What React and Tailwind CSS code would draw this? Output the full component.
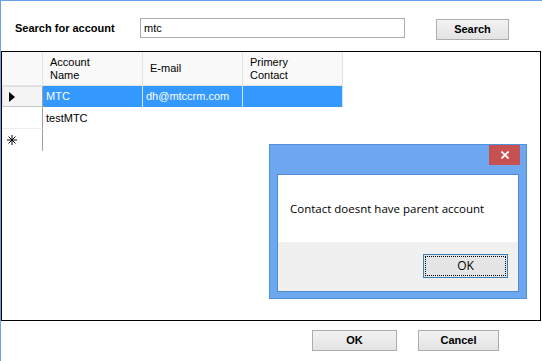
const COLS = [
  { key: "name", label: ["Account", "Name"] },
  { key: "email", label: ["E-mail"] },
  { key: "contact", label: ["Primery", "Contact"] },
];

const ROWS = [
  { name: "MTC", email: "dh@mtccrm.com", contact: "", selected: true, h: "h-[21px]" },
  { name: "testMTC", email: "", contact: "", h: "h-[22px]" },
];

const Arrow = () => (
  <svg width="6" height="10" viewBox="0 0 6 10">
    <polygon points="0,0 6,5 0,10" fill="#000" />
  </svg>
);

const Star = () => (
  <svg width="10" height="10" viewBox="0 0 10 10" stroke="#000" strokeWidth="1">
    <line x1="5" y1="0" x2="5" y2="10" />
    <line x1="0" y1="5" x2="10" y2="5" />
    <line x1="1.5" y1="1.5" x2="8.5" y2="8.5" />
    <line x1="8.5" y1="1.5" x2="1.5" y2="8.5" />
  </svg>
);

const WinButton = ({ children, className = "" }) => (
  <button
    type="button"
    className={`h-[21px] border border-[#adadad] bg-gradient-to-b from-[#f2f2f2] to-[#e3e3e3] text-[11px] font-bold text-black leading-none ${className}`}
  >
    {children}
  </button>
);

const MessageBox = () => (
  <div className="absolute left-[268px] top-[143px] w-[258px] h-[155px] bg-[#6ca7f0] border border-[#5290dc] flex flex-col">
    <div className="h-[29px] flex justify-end items-start pr-[6px]">
      <div className="w-[31px] h-[20px] bg-[#c75050] flex items-center justify-center">
        <svg width="8" height="8" viewBox="0 0 8 8" stroke="#fff" strokeWidth="1.8">
          <line x1="0.5" y1="0.5" x2="7.5" y2="7.5" />
          <line x1="7.5" y1="0.5" x2="0.5" y2="7.5" />
        </svg>
      </div>
    </div>
    <div className="mx-[7px] border border-[#4f8ad2] flex flex-col">
      <div className="h-[67px] bg-white flex items-center pl-[12px] font-['Open_Sans',sans-serif] text-[11.5px] text-black">
        Contact doesnt have parent account
      </div>
      <div className="h-[49px] bg-[#f0f0f0] flex justify-end items-start pt-[12px] pr-[10px]">
        <div className="w-[85px] h-[24px] border border-[#3c7fb1] bg-[#e5e5e5] p-[1px]">
          <div className="w-full h-full border border-dotted border-black flex items-center justify-center font-['Open_Sans',sans-serif] text-[12px] text-black">
            OK
          </div>
        </div>
      </div>
    </div>
  </div>
);

export default function App() {
  return (
    <div className="relative w-[542px] h-[361px] bg-white border-t border-l border-[#6aa2e6] font-['Liberation_Sans',Arial,sans-serif] text-black overflow-hidden">
      {/* search bar */}
      <div className="flex items-start pt-[17px]">
        <div className="ml-[14px] w-[125px] mt-[3px] text-[11px] font-bold leading-[14px]">
          Search for account
        </div>
        <div className="w-[265px] h-[20px] border border-[#abadb3] bg-white flex items-center pl-[3px] text-[11px]">
          mtc
        </div>
        <WinButton className="ml-[31px] mt-[1px] w-[73px]">Search</WinButton>
      </div>

      {/* grid */}
      <div className="mt-[11px] w-[540px] h-[270px] border border-black bg-white">
        <div className="flex flex-col w-[341px] text-[11px]">
          <div className="flex h-[34px] bg-[#f9f9f9] border-b border-[#e3e3e3]">
            <div className="w-[41px] border-r border-[#e3e3e3]" />
            {COLS.map((c) => (
              <div
                key={c.key}
                className="w-[100px] border-r border-[#e3e3e3] flex flex-col justify-center pl-[7px] leading-[13px]"
              >
                {c.label.map((l) => (
                  <span key={l}>{l}</span>
                ))}
              </div>
            ))}
          </div>
          {ROWS.map((r) => (
            <div key={r.name} className={`flex ${r.h}`}>
              <div
                className={`w-[41px] border-r border-[#a0a0a0] flex items-center pl-[6px] ${
                  r.selected ? "bg-[#f4f4f4] border-t border-l border-b border-t-[#e0e0e0] border-l-[#e0e0e0] border-b-[#c8c8c8]" : "border-b border-b-[#ececec]"
                }`}
              >
                {r.selected && <Arrow />}
              </div>
              {COLS.map((c) => (
                <div
                  key={c.key}
                  className={`w-[100px] flex items-center pl-[3px] ${
                    r.selected ? "bg-[#3399ff] text-white border-r border-[#cfe4fb]" : ""
                  }`}
                >
                  {r[c.key]}
                </div>
              ))}
            </div>
          ))}
          <div className="flex h-[22px]">
            <div className="w-[41px] border-r border-[#a0a0a0] flex items-center pl-[5px]">
              <Star />
            </div>
          </div>
        </div>
      </div>

      {/* bottom buttons */}
      <div className="flex pt-[9px]">
        <WinButton className="ml-[311px] w-[85px]">OK</WinButton>
        <WinButton className="ml-[21px] w-[81px]">Cancel</WinButton>
      </div>

      <MessageBox />
    </div>
  );
}
